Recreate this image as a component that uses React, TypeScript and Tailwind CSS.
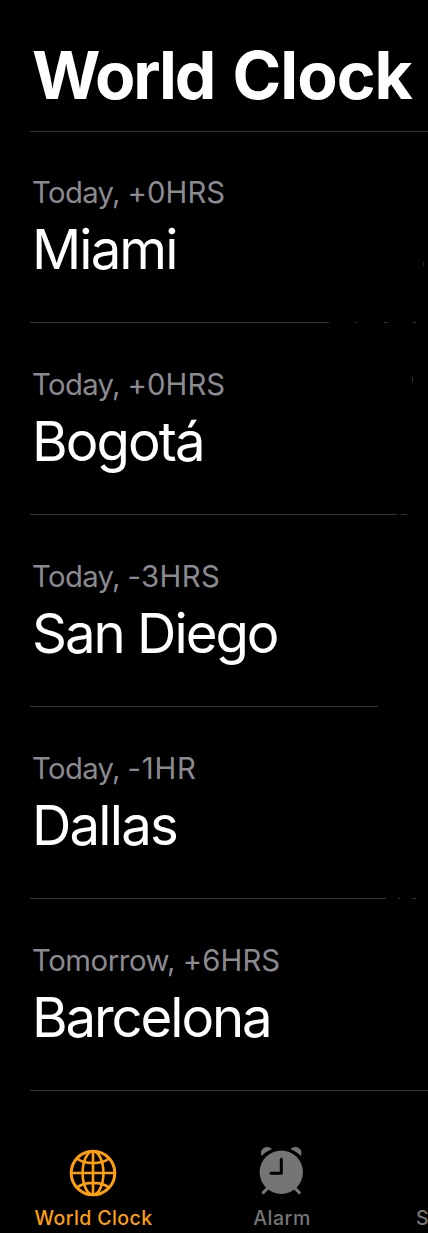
type Segment = [gap: number, width: number];

interface City {
  name: string;
  day: string;
  offset: string;
  tracking: string;
  dayTracking: string;
  offsetTracking: string;
  divider: Segment[];
}

const cities: City[] = [
  {
    name: "Miami",
    day: "Today,",
    offset: "+0HRS",
    tracking: "tracking-[-1.9px]",
    dayTracking: "tracking-[-0.65px]",
    offsetTracking: "tracking-[0.1px]",
    divider: [[0, 299], [26, 2], [27, 4], [25, 3]],
  },
  {
    name: "Bogotá",
    day: "Today,",
    offset: "+0HRS",
    tracking: "tracking-[-1.9px]",
    dayTracking: "tracking-[-0.65px]",
    offsetTracking: "tracking-[0.1px]",
    divider: [[0, 367], [4, 6]],
  },
  {
    name: "San Diego",
    day: "Today,",
    offset: "-3HRS",
    tracking: "tracking-[-2px]",
    dayTracking: "tracking-[-0.65px]",
    offsetTracking: "tracking-[0.4px]",
    divider: [[0, 348]],
  },
  {
    name: "Dallas",
    day: "Today,",
    offset: "-1HR",
    tracking: "tracking-[-1.8px]",
    dayTracking: "tracking-[-0.65px]",
    offsetTracking: "tracking-[0.8px]",
    divider: [[0, 356], [12, 2], [12, 4]],
  },
  {
    name: "Barcelona",
    day: "Tomorrow,",
    offset: "+6HRS",
    tracking: "tracking-[-2.1px]",
    dayTracking: "tracking-[-0.42px]",
    offsetTracking: "tracking-[0.1px]",
    divider: [[0, 398]],
  },
];

const Divider = ({ segments }: { segments: Segment[] }) => (
  <div className="flex h-px">
    {segments.map(([gap, width], i) => (
      <div
        key={i}
        className="h-px shrink-0 bg-[#343437]"
        style={{ marginLeft: gap, width }}
      />
    ))}
  </div>
);

const CityRow = ({ city }: { city: City }) => (
  <li className="flex h-48 flex-col first:h-[191px]">
    <div className="flex flex-1 flex-col justify-end pb-10 pl-0.5">
      <p className={`text-[29.3px] leading-9 text-[#8b8a91] ${city.dayTracking}`}>
        {city.day} <span className={city.offsetTracking}>{city.offset}</span>
      </p>
      <h2 className={`mt-[5px] text-[54.5px] leading-[66px] text-white ${city.tracking}`}>
        {city.name}
      </h2>
    </div>
    <Divider segments={city.divider} />
  </li>
);

const GlobeIcon = () => (
  <svg width="48" height="48" viewBox="0 0 48 48" fill="none" stroke="currentColor" strokeWidth="2.6">
    <circle cx="24" cy="24" r="21.8" strokeWidth="3" />
    <ellipse cx="24" cy="24" rx="10.4" ry="21.8" />
    <path d="M24 2v44M2 24h44M8 9.5C16 15.7 32 15.7 40 9.5M8 38.5C16 32.3 32 32.3 40 38.5" />
  </svg>
);

const AlarmIcon = () => (
  <svg width="48" height="50" viewBox="0 0 48 50" fill="none">
    <path
      d="M3.7 9.9C2.3 7.2 2.8 4 5.6 2.1C8.5 .2 12 .8 13.9 3.3C10 4.6 6.6 7 3.7 9.9Z"
      fill="currentColor"
    />
    <path
      d="M42.8 9.9C44.2 7.2 43.7 4 40.9 2.1C38 .2 34.5 .8 32.6 3.3C36.5 4.6 39.9 7 42.8 9.9Z"
      fill="currentColor"
    />
    <path d="M10 41.8L5.2 46.6M36.5 41.8L41.3 46.6" stroke="currentColor" strokeWidth="3" strokeLinecap="round" />
    <circle cx="23.3" cy="26.2" r="21.7" fill="currentColor" />
    <path d="M23.3 13.3v13.9H13" stroke="black" strokeWidth="3" strokeLinecap="round" strokeLinejoin="round" />
  </svg>
);

export default function App() {
  return (
    <div className="relative flex h-[1233px] w-[428px] flex-col overflow-hidden bg-black font-['Inter',sans-serif]">
      <header className="flex h-[131px] shrink-0 items-start pt-[35px] pl-8">
        <h1 className="text-[66px] leading-[80px] font-bold tracking-[-2.2px] whitespace-nowrap text-white">
          World <span className="pl-[5px] tracking-[-1px]">Clock</span>
        </h1>
      </header>

      <main className="shrink-0 pl-[30px]">
        <Divider segments={[[0, 398]]} />
        <ul>
          {cities.map((city) => (
            <CityRow key={city.name} city={city} />
          ))}
        </ul>
      </main>

      <nav className="flex h-[142px] shrink-0 pt-[54px] text-[19.5px] leading-6 whitespace-nowrap">
        <a className="flex w-[187px] shrink-0 flex-col items-center font-medium text-[#fe9f0b]">
          <div className="mt-1 mr-px flex h-[57px] items-start">
            <GlobeIcon />
          </div>
          <span className="tracking-[0.4px]">World Clock</span>
        </a>
        <a className="flex w-[190px] shrink-0 flex-col items-center font-medium text-[#757575]">
          <div className="flex h-[61px] items-start pt-px">
            <AlarmIcon />
          </div>
          <span className="tracking-[0.5px]">Alarm</span>
        </a>
        <a className="shrink-0 pt-[61px] pl-[39px] font-medium text-[#757575]">
          <span className="tracking-[0.7px]">Stopwatch</span>
        </a>
      </nav>

      <div className="absolute top-[262px] left-[423px] h-1 w-px bg-[#242424]" />
      <div className="absolute top-[377px] left-[412px] h-[5px] w-px bg-[#343434]" />
    </div>
  );
}
